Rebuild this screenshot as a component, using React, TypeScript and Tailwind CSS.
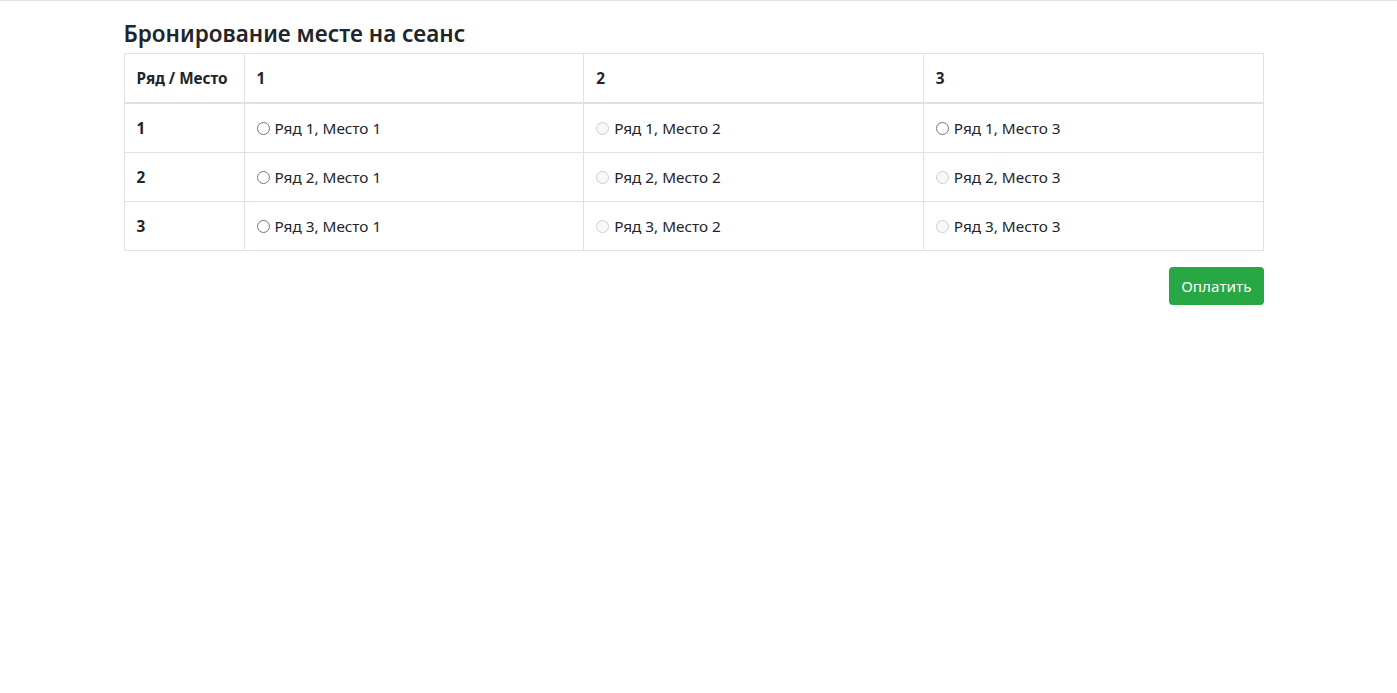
import React from "react";

const rows = [1, 2, 3];
const cols = [1, 2, 3];
const disabled: Record<string, boolean> = {
  "1-2": true,
  "2-2": true,
  "2-3": true,
  "3-2": true,
  "3-3": true,
};

export default function App() {
  return (
    <div
      className="min-h-screen bg-white text-[#212529] text-[15.3px] leading-6"
      style={{ fontFamily: '"Noto Sans", "Open Sans", sans-serif' }}
    >
      <div className="h-px bg-[#dee2e6]" />
      <div className="mx-auto w-[1140px] -translate-x-[5px]">
        <h4 className="mt-[18px] mb-[5px] text-[22.5px] leading-[29px] font-semibold whitespace-nowrap">
          Бронирование месте на сеанс
        </h4>
        <table className="w-full border-collapse border border-[#dee2e6]">
          <thead>
            <tr>
              <th className="w-[120px] whitespace-nowrap border border-b-2 border-[#dee2e6] px-3 py-3 text-left font-bold">
                Ряд / Место
              </th>
              {cols.map((c) => (
                <th
                  key={c}
                  className="border border-b-2 border-[#dee2e6] px-3 py-3 text-left font-bold"
                >
                  {c}
                </th>
              ))}
            </tr>
          </thead>
          <tbody>
            {rows.map((r) => (
              <tr key={r}>
                <td className="border border-[#dee2e6] px-3 py-3 font-bold">{r}</td>
                {cols.map((c) => {
                  const dis = disabled[`${r}-${c}`];
                  return (
                    <td key={c} className="border border-[#dee2e6] px-3 py-3">
                      <label className="flex h-6 items-center gap-[5px] whitespace-nowrap">
                        <input
                          type="radio"
                          name="seat"
                          disabled={dis}
                          className="m-0 h-[13px] w-[13px]"
                        />
                        <span>
                          Ряд {r}, Место {c}
                        </span>
                      </label>
                    </td>
                  );
                })}
              </tr>
            ))}
          </tbody>
        </table>
        <div className="mt-[16px] flex justify-end">
          <button className="h-[38px] rounded-[4px] bg-[#28a745] px-3 text-white">
            Оплатить
          </button>
        </div>
      </div>
    </div>
  );
}
